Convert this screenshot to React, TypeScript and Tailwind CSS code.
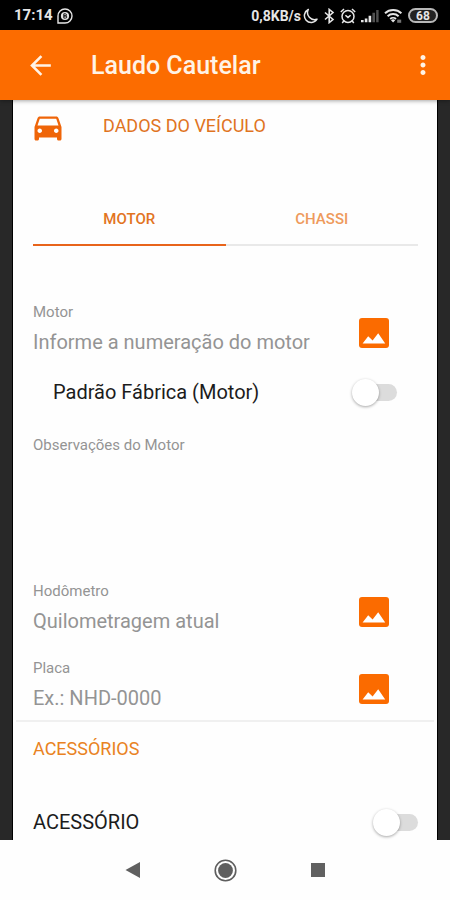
import { useId, useState } from "react";
import { MdArrowBack, MdDirectionsCar, MdMoreVert } from "react-icons/md";

const TABS = ["MOTOR", "CHASSI"];

function StatusBar() {
  return (
    <div className="flex h-[30px] items-center justify-between bg-black pl-[14px] pr-3 pt-px text-[#e6e6e6]">
      <div className="flex items-center gap-1">
        <span className="text-[15px] font-bold">17:14</span>
        <svg className="size-4" viewBox="0 0 16 16" fill="none" stroke="currentColor">
          <path d="M1 15V8a7 7 0 1 1 7 7z" strokeWidth="1.4" />
          <circle cx="8" cy="8" r="4.1" fill="currentColor" stroke="none" />
          <path d="M6.8 5.8h1.6a1 1 0 0 1 0 2.1H6.8zm0 2.1h1.9a1.1 1.1 0 0 1 0 2.2H6.8z" stroke="#000" strokeWidth="0.9" />
        </svg>
      </div>
      <div className="flex items-center gap-[5px]">
        <span className="text-sm font-bold">0,8KB/s</span>
        {/* Moon */}
        <svg className="-ml-[3px] h-4 w-[15px]" viewBox="0 0 15 16" fill="none" stroke="currentColor" strokeWidth="1.5" strokeLinejoin="round">
          <path d="M5.3 1.5A6.8 6.8 0 1 0 14 11.2 7 7 0 0 1 5.3 1.5z" />
        </svg>
        {/* Bluetooth */}
        <svg className="h-4 w-3" viewBox="0 0 12 16" fill="none" stroke="currentColor" strokeWidth="1.6">
          <path d="M2 4.5l8 7L6.2 14.6V1.4L10 4.5l-8 7" />
        </svg>
        {/* Alarm */}
        <svg className="size-4" viewBox="0 0 16 16" fill="none" stroke="currentColor" strokeWidth="1.5">
          <circle cx="8" cy="8.4" r="6" />
          <path d="M0.8 4L4 1M15.2 4L12 1M3.8 13L2.2 15M12.2 13l1.6 2M5.4 7.2L8 9.4l2.6-2.2" />
        </svg>
        {/* Signal */}
        <svg className="h-4 w-[18px]" viewBox="0 0 18 16" fill="currentColor">
          <path d="M0 12h2.6v2.2H0zM3.8 10.4h2.6v3.8H3.8zM7.6 7.8h2.6v6.4H7.6z" />
          <path d="M11.4 4.8H14v9.4h-2.6zM15.2 2h2.4v12.2h-2.4z" opacity="0.35" />
        </svg>
        {/* Wifi */}
        <svg className="h-4 w-[19px]" viewBox="0 0 19 16" fill="none" stroke="currentColor" strokeWidth="1.9">
          <path d="M1 5.2a12 12 0 0 1 16.4 0M3.6 8.2a8 8 0 0 1 11 0M6.2 11a4.2 4.2 0 0 1 5.8 0" />
          <path d="M7 12.2a3 3 0 0 1 4.2 0L9.1 14.6z" fill="currentColor" stroke="none" />
          <path d="M13.2 11.6h4v3.2h-4z" fill="currentColor" stroke="none" opacity="0.5" />
        </svg>
        <span className="flex h-[15px] w-[30px] items-center justify-center rounded-full border-2 border-[#b8b8b8] bg-[#222] text-xs font-bold leading-none">
          68
        </span>
      </div>
    </div>
  );
}

function AppBar() {
  return (
    <header className="relative z-10 flex h-[70px] items-center bg-[#fc6c00] pl-[25px] pr-3 text-[#fff3e6] shadow-[0_1px_4px_rgba(0,0,0,0.35)]">
      <button type="button" aria-label="Voltar">
        <MdArrowBack className="size-[31px]" />
      </button>
      <h1 className="flex-1 pl-[35px] pt-[2px] text-[25px] font-medium">Laudo Cautelar</h1>
      <button type="button" aria-label="Mais opções">
        <MdMoreVert className="size-[30px]" />
      </button>
    </header>
  );
}

function Field({ label, placeholder }: { label: string; placeholder: string }) {
  const id = useId();
  return (
    <div className="flex items-center justify-between pr-[29px]">
      <div className="min-w-0 flex-1">
        <label htmlFor={id} className="block text-[15px] leading-5 text-[#949494]">
          {label}
        </label>
        <input
          id={id}
          type="text"
          placeholder={placeholder}
          className="h-10 w-full text-xl text-[#222] outline-none placeholder:text-[#949494]"
        />
      </div>
      <button type="button" aria-label={`Foto: ${label}`} className="pt-[2px]">
        <svg className="size-[30px]" viewBox="0 0 30 30">
          <rect width="30" height="30" rx="3" fill="#fb6b00" />
          <path d="M3.6 25.4l5.6-7.2 4.4 4.2 5.6-7.2 7 10.2z" fill="#fff" />
        </svg>
      </button>
    </div>
  );
}

function Toggle({ label, className }: { label: string; className: string }) {
  const id = useId();
  return (
    <div className={`flex items-center justify-between text-[#1c1c1c] ${className}`}>
      <label htmlFor={id} className="text-xl">
        {label}
      </label>
      <input
        id={id}
        type="checkbox"
        role="switch"
        className="relative h-[17px] w-10 appearance-none rounded-full bg-[#dcdcdc] before:absolute before:-left-[5px] before:-top-[5px] before:size-[27px] before:rounded-full before:bg-white before:shadow-[0_1px_3px_rgba(0,0,0,0.35)] before:transition-transform checked:bg-[#fdb580] checked:before:translate-x-5 checked:before:bg-[#fc6c00]"
      />
    </div>
  );
}

function SystemNav() {
  return (
    <nav className="flex h-[60px] items-center justify-center gap-[73px] bg-[#fefefe]">
      <button type="button" aria-label="Anterior">
        <svg className="size-4" viewBox="0 0 16 16">
          <path d="M0.5 8L15 0v16z" fill="#606060" />
        </svg>
      </button>
      <button type="button" aria-label="Início">
        <svg className="size-[23px]" viewBox="0 0 23 23">
          <circle cx="11.5" cy="11.5" r="10.3" fill="none" stroke="#5e5e5e" strokeWidth="1.6" />
          <circle cx="11.5" cy="11.5" r="7.4" fill="#5e5e5e" />
        </svg>
      </button>
      <button type="button" aria-label="Recentes">
        <svg className="size-4" viewBox="0 0 16 16">
          <path d="M1 1h14v14H1z" fill="#606060" />
        </svg>
      </button>
    </nav>
  );
}

export default function App() {
  const [tab, setTab] = useState(0);

  return (
    <div className="flex h-screen flex-col overflow-hidden bg-[#282828] font-[Roboto,sans-serif]">
      <StatusBar />
      <AppBar />

      <main className="min-h-0 flex-1 overflow-hidden px-3">
        <div className="h-full overflow-hidden border-x border-black bg-[#fefefe]">
          <section className="pl-5 pr-[19px]">
            <div className="flex h-[52px] items-center">
              <MdDirectionsCar className="-ml-[3px] mt-px size-9 text-[#ef6508]" />
              <h2 className="pl-[37px] text-lg text-[#e0741f]">DADOS DO VEÍCULO</h2>
            </div>

            <div role="tablist" className="mt-10 flex">
              {TABS.map((name, i) => (
                <button
                  key={name}
                  type="button"
                  role="tab"
                  aria-selected={tab === i}
                  onClick={() => setTab(i)}
                  className={`h-[54px] flex-1 border-b-2 pt-[2px] text-[15px] font-medium ${
                    tab === i ? "border-[#e8641b] text-[#e2741f]" : "border-[#e9e9e9] text-[#ee9a5c]"
                  }`}
                >
                  {name}
                </button>
              ))}
            </div>

            <div className="pt-14">
              <Field label="Motor" placeholder="Informe a numeração do motor" />
              <Toggle label="Padrão Fábrica (Motor)" className="h-[60px] pl-5 pr-[21px]" />
              <div className="pt-[13px]">
                <label htmlFor="obs-motor" className="block text-[15px] leading-5 text-[#949494]">
                  Observações do Motor
                </label>
                <textarea
                  id="obs-motor"
                  className="block h-[126px] w-full resize-none text-xl text-[#222] outline-none"
                />
              </div>
              <div className="flex flex-col gap-[17px]">
                <Field label="Hodômetro" placeholder="Quilometragem atual" />
                <Field label="Placa" placeholder="Ex.: NHD-0000" />
              </div>
            </div>
          </section>

          <section className="mx-[3px] mt-[2px] border-t-2 border-[#f0f0f0] pl-[17px] pr-4">
            <h2 className="flex h-[53px] items-center text-lg text-[#e98222]">ACESSÓRIOS</h2>
            <Toggle label="ACESSÓRIO" className="mt-[29px] h-9" />
          </section>
        </div>
      </main>

      <SystemNav />
    </div>
  );
}
